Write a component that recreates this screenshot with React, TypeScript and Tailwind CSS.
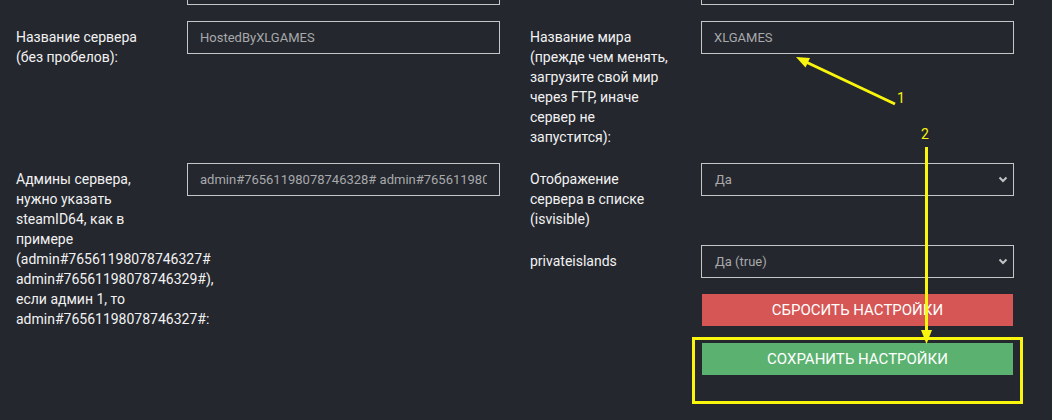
import React from "react";

const labelCls = "pt-[6px] text-[14px] leading-[20px] text-[#f2f2f2]";
const inputCls =
  "block h-[33px] w-[313px] border border-[#c4c6c8] bg-transparent px-[12px] text-[13px] text-[#a8a9ab] outline-none";

function Chevron() {
  return (
    <svg
      className="pointer-events-none absolute right-[6px] top-[13px]"
      width="10"
      height="7"
      viewBox="0 0 10 7"
    >
      <path d="M1.5 1.5 L5 5 L8.5 1.5" fill="none" stroke="#c2c4c6" strokeWidth="2" />
    </svg>
  );
}

function Select({ value }: { value: string }) {
  return (
    <div className="relative h-[33px] w-[313px] self-start">
      <select
        defaultValue={value}
        className="block h-[33px] w-full appearance-none border border-[#c4c6c8] bg-transparent pl-[13px] text-[13px] text-[#a8a9ab] outline-none"
      >
        <option value={value}>{value}</option>
      </select>
      <Chevron />
    </div>
  );
}

export default function App() {
  return (
    <div
      className="relative h-[420px] w-[1052px] overflow-hidden bg-[#24272e]"
      style={{ fontFamily: "Roboto, 'Liberation Sans', sans-serif" }}
    >
      <div className="-mt-[28px] grid grid-cols-[171px_343px_171px_313px] gap-y-[16px] pl-[16px]">
        {/* row 1 (scrolled off the top) */}
        <div className={labelCls}></div>
        <input className={inputCls} defaultValue="" readOnly />
        <div className={labelCls}></div>
        <input className={inputCls} defaultValue="" readOnly />

        {/* row 2 */}
        <div className={labelCls}>
          Название сервера
          <br />
          (без пробелов):
        </div>
        <input className={inputCls} defaultValue="HostedByXLGAMES" readOnly />
        <div className={labelCls}>
          Название мира
          <br />
          (прежде чем менять,
          <br />
          загрузите свой мир
          <br />
          через FTP, иначе
          <br />
          сервер не
          <br />
          запустится):
        </div>
        <input className={inputCls} defaultValue="XLGAMES" readOnly />

        {/* row 3 */}
        <div className={`${labelCls} row-span-3`}>
          Админы сервера,
          <br />
          нужно указать
          <br />
          steamID64, как в
          <br />
          примере
          <br />
          (admin#76561198078746327#
          <br />
          admin#76561198078746329#),
          <br />
          если админ 1, то
          <br />
          admin#76561198078746327#:
        </div>
        <input
          className={inputCls}
          defaultValue="admin#76561198078746328# admin#76561198078746329#"
          readOnly
        />
        <div className={labelCls}>
          Отображение
          <br />
          сервера в списке
          <br />
          (isvisible)
        </div>
        <Select value="Да" />

        {/* row 4 */}
        <div className={`${labelCls} col-start-3`}>privateislands</div>
        <Select value="Да (true)" />

        {/* row 5 */}
        <div className="col-start-4 flex flex-col gap-[17px] pl-[1px]">
          <button className="h-[32px] w-[311px] bg-[#d55654] text-[15px] uppercase text-white">
            Сбросить настройки
          </button>
          <button className="h-[32px] w-[311px] bg-[#5bb270] text-[15px] uppercase text-white">
            Сохранить настройки
          </button>
        </div>
      </div>

      {/* annotations */}
      <svg
        className="pointer-events-none absolute left-0 top-0"
        width="1052"
        height="420"
        viewBox="0 0 1052 420"
      >
        <line x1="895" y1="104" x2="806" y2="62" stroke="#f9f50c" strokeWidth="3" />
        <polygon points="796,57 810,58 805.5,67.5" fill="#f9f50c" />
        <text x="897" y="103" fill="#f9f50c" fontSize="14" fontFamily="Roboto, 'Liberation Sans', sans-serif">
          1
        </text>
        <text x="921" y="139" fill="#f9f50c" fontSize="14" fontFamily="Roboto, 'Liberation Sans', sans-serif">
          2
        </text>
        <line x1="926.5" y1="147" x2="926.5" y2="332" stroke="#f9f50c" strokeWidth="3" />
        <polygon points="921,330 932,330 926.5,344" fill="#f9f50c" />
        <rect x="693.5" y="338.5" width="328" height="64" fill="none" stroke="#f9f50c" strokeWidth="3" />
      </svg>
    </div>
  );
}
